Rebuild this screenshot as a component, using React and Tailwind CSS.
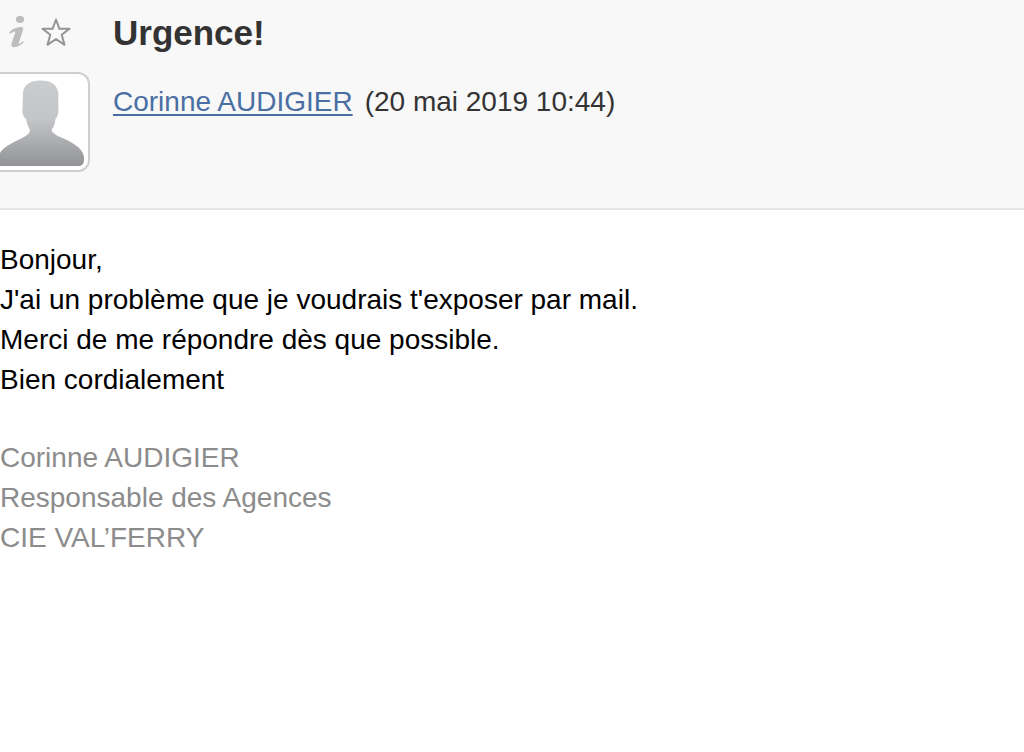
function InfoIcon() {
  return (
    <svg width="18" height="34" viewBox="0 0 18 34" fill="#bdbdbd" aria-hidden="true">
      <ellipse cx="12" cy="3.400" rx="4" ry="3.500" />
      <path d="M1 16.500C4 13 8 11.200 13 11C15 11 15.400 12.200 14.900 14L10.900 26.800C10.500 28 11.200 28.300 12.200 27.500L15 25.200L15.900 26.300C12.500 29.600 9 31.200 5.900 31.200C3.500 31.200 2.900 29.500 3.600 27.200L7 17.200C7.500 15.700 6.600 15.200 5.200 16L1.800 17.800Z" />
    </svg>
  );
}

function StarIcon() {
  return (
    <svg width="32" height="32" viewBox="0 0 32 32" fill="none" stroke="#949494" strokeWidth="2" strokeLinejoin="round" aria-hidden="true">
      <path d="M16 3.500L19.400 12.800H29.500L21.700 18.800L24.500 28.800L16 23L7.500 28.800L10.300 18.800L2.500 12.800H12.600Z" />
    </svg>
  );
}

function Avatar() {
  return (
    <svg className="block" width="85" height="87" viewBox="0 0 85 87" role="img" aria-label="Corinne AUDIGIER">
      <defs>
        <linearGradient id="silhouette" x1="0" y1="0" x2="0" y2="1">
          <stop offset="0" stopColor="#cbccce" />
          <stop offset="0.45" stopColor="#c4c5c7" />
          <stop offset="1" stopColor="#929396" />
        </linearGradient>
      </defs>
      <path
        fill="url(#silhouette)"
        d="M41 .500C30 .5 23.500 5 23 13L22.500 29C21.800 33 23.500 37 26 39C27 44 28 46 30 50C30 55 23 57.500 16 61C8 65 2 69 0 73V86H78Q84 86 84 80V77C83 70 77 65.500 69 61C61 57 53 55 51.500 50C54 47 55 43 55.500 39C58 36.500 58.800 32 58.300 29V13C57.500 5 51 .500 41 .500Z"
      />
    </svg>
  );
}

export default function App() {
  return (
    <main className="min-h-screen bg-white font-['Liberation_Sans',Arial,sans-serif] text-black">
      <header className="grid grid-cols-[113px_1fr] border-b-2 border-[#e5e5e5] bg-[#f8f8f8] pb-9">
        <div className="flex h-[72px] items-start gap-3.5 pt-4 pl-2">
          <button type="button" aria-label="Informations">
            <InfoIcon />
          </button>
          <button type="button" aria-label="Suivre ce message">
            <StarIcon />
          </button>
        </div>
        <h1 className="pt-3 text-[35px] leading-[42px] font-bold text-[#333333]">Urgence!</h1>
        <div className="w-[90px] rounded-r-xl border-2 border-l-0 border-[#cfcfcf] bg-white pt-[6px] pb-[3px]">
          <Avatar />
        </div>
        <p className="flex flex-wrap items-start gap-x-3 pt-3 text-[28px] leading-[36px] text-[#333333]">
          <a href="#contact" className="text-[#4a6fa3] underline decoration-2 underline-offset-3">
            Corinne AUDIGIER
          </a>
          <time dateTime="2019-05-20T10:44">(20 mai 2019 10:44)</time>
        </p>
      </header>
      <article className="pt-[30px] text-[28px] leading-[40px]">
        <p>Bonjour,</p>
        <p>J'ai un problème que je voudrais t'exposer par mail.</p>
        <p>Merci de me répondre dès que possible.</p>
        <p>Bien cordialement</p>
        <address className="pt-[38px] text-[#8c8c8c] not-italic">
          <p>Corinne AUDIGIER</p>
          <p>Responsable des Agences</p>
          <p>CIE VAL’FERRY</p>
        </address>
      </article>
    </main>
  );
}
